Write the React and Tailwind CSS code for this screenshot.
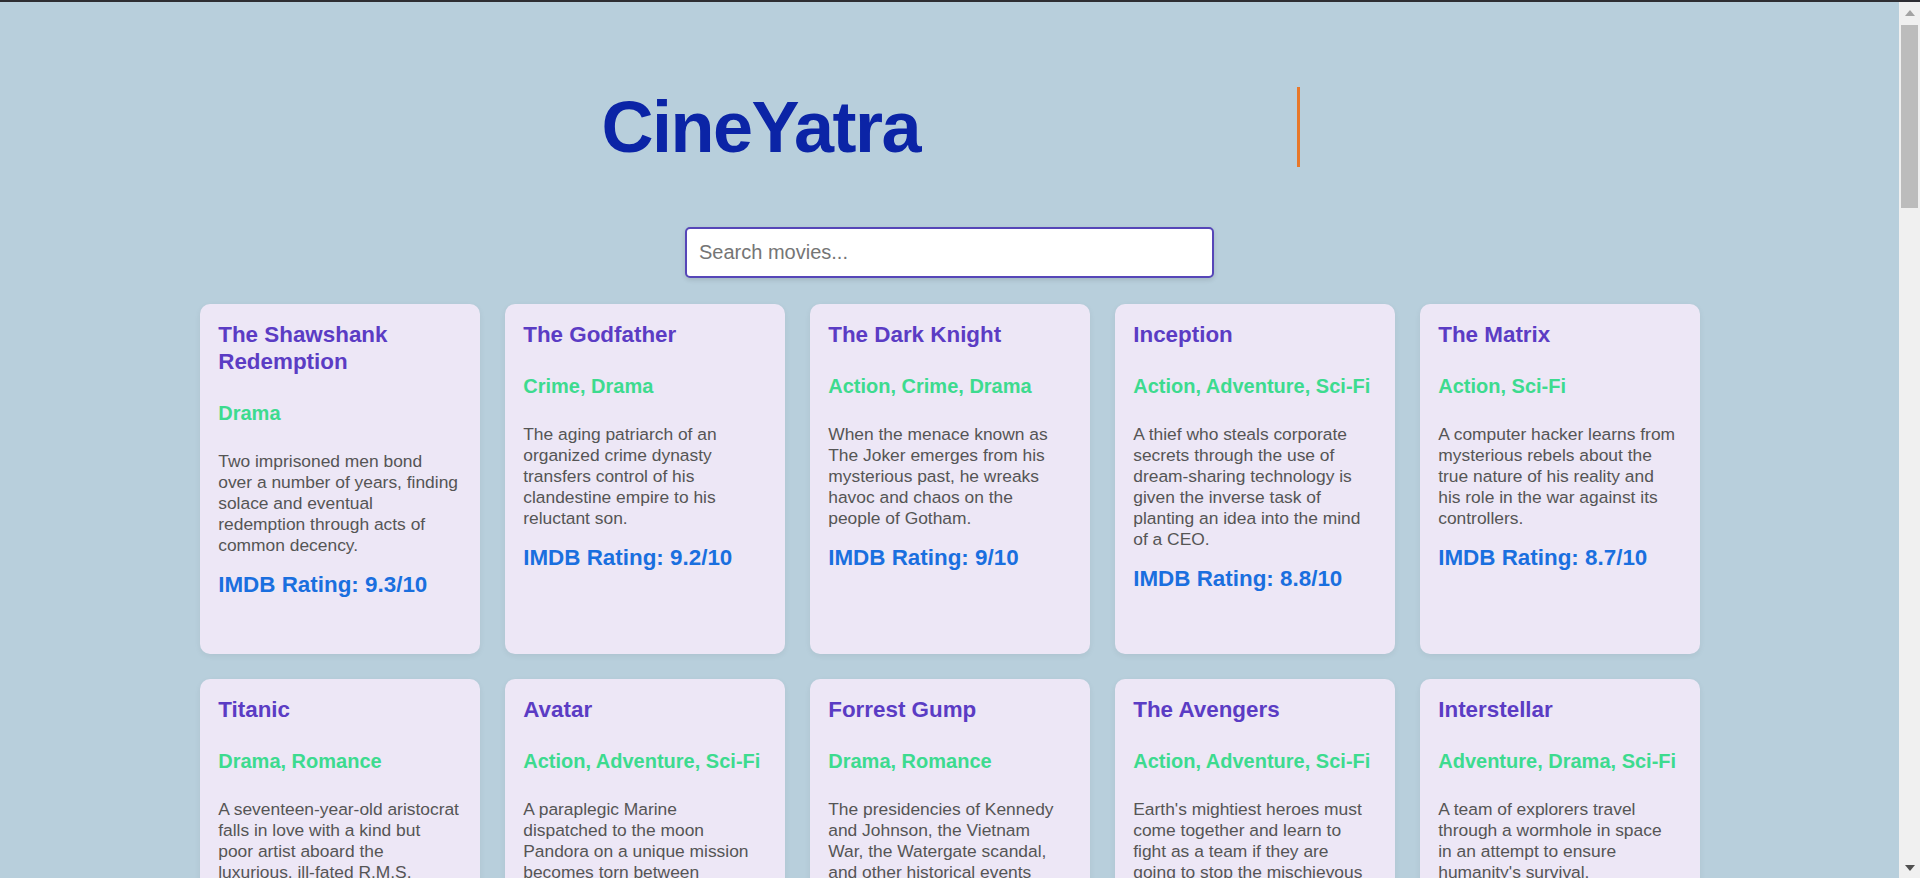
import React, { useState } from 'react';

// descriptions are kept as the lines the design wraps them into
const movies = [
  {
    title: 'The Shawshank Redemption',
    genre: 'Drama',
    lines: ['Two imprisoned men bond', 'over a number of years, finding', 'solace and eventual', 'redemption through acts of', 'common decency.'],
    rating: 9.3,
  },
  {
    title: 'The Godfather',
    genre: 'Crime, Drama',
    lines: ['The aging patriarch of an', 'organized crime dynasty', 'transfers control of his', 'clandestine empire to his', 'reluctant son.'],
    rating: 9.2,
  },
  {
    title: 'The Dark Knight',
    genre: 'Action, Crime, Drama',
    lines: ['When the menace known as', 'The Joker emerges from his', 'mysterious past, he wreaks', 'havoc and chaos on the', 'people of Gotham.'],
    rating: 9,
  },
  {
    title: 'Inception',
    genre: 'Action, Adventure, Sci-Fi',
    lines: ['A thief who steals corporate', 'secrets through the use of', 'dream-sharing technology is', 'given the inverse task of', 'planting an idea into the mind', 'of a CEO.'],
    rating: 8.8,
  },
  {
    title: 'The Matrix',
    genre: 'Action, Sci-Fi',
    lines: ['A computer hacker learns from', 'mysterious rebels about the', 'true nature of his reality and', 'his role in the war against its', 'controllers.'],
    rating: 8.7,
  },
  {
    title: 'Titanic',
    genre: 'Drama, Romance',
    lines: ['A seventeen-year-old aristocrat', 'falls in love with a kind but', 'poor artist aboard the', 'luxurious, ill-fated R.M.S.', 'Titanic.'],
    rating: 7.9,
  },
  {
    title: 'Avatar',
    genre: 'Action, Adventure, Sci-Fi',
    lines: ['A paraplegic Marine', 'dispatched to the moon', 'Pandora on a unique mission', 'becomes torn between', 'following his orders and', 'protecting the world he feels', 'is his home.'],
    rating: 7.9,
  },
  {
    title: 'Forrest Gump',
    genre: 'Drama, Romance',
    lines: ['The presidencies of Kennedy', 'and Johnson, the Vietnam', 'War, the Watergate scandal,', 'and other historical events', 'unfold from the perspective', 'of an Alabama man.'],
    rating: 8.8,
  },
  {
    title: 'The Avengers',
    genre: 'Action, Adventure, Sci-Fi',
    lines: ["Earth's mightiest heroes must", 'come together and learn to', 'fight as a team if they are', 'going to stop the mischievous', 'Loki and his alien army.'],
    rating: 8,
  },
  {
    title: 'Interstellar',
    genre: 'Adventure, Drama, Sci-Fi',
    lines: ['A team of explorers travel', 'through a wormhole in space', 'in an attempt to ensure', "humanity's survival."],
    rating: 8.6,
  },
];

const MovieCard = ({ movie }) => (
  <div className="h-[350px] rounded-[10px] bg-[#ede7f6] pt-[17px] px-[18.75px] shadow-[0_2px_6px_rgba(0,0,0,0.06)]">
    <h3 className="text-[22.4px] leading-[27px] font-bold text-[#5b3cc4]">{movie.title}</h3>
    <p className="mt-[26.5px] text-[20px] leading-[23px] font-bold text-[#3ddb8f]">{movie.genre}</p>
    <p className="mt-[26.5px] text-[17.4px] leading-[21px] text-[#555555]">
      {movie.lines.map((line, i) => (
        <span key={i} className="block whitespace-nowrap">{line}</span>
      ))}
    </p>
    <p className="mt-[16px] text-[22.4px] leading-[26px] font-bold text-[#1a6fdf]">
      IMDB Rating: {movie.rating}/10
    </p>
  </div>
);

// fake window scrollbar, the screenshot has one
const ScrollBar = () => (
  <div className="w-[21px] shrink-0 bg-[#f0f0f0] flex flex-col items-center">
    <div className="h-[21px] w-full flex items-center justify-center">
      <svg width="10" height="6" viewBox="0 0 10 6">
        <polygon points="5,0 10,6 0,6" fill="#a3a3a3" />
      </svg>
    </div>
    <div className="mt-[2px] h-[183px] w-[17px] bg-[#bcbcbc]" />
    <div className="flex-1" />
    <div className="h-[21px] w-full flex items-center justify-center">
      <svg width="10" height="6" viewBox="0 0 10 6">
        <polygon points="0,0 10,0 5,6" fill="#505050" />
      </svg>
    </div>
  </div>
);

export default function App() {
  const [query, setQuery] = useState('');

  const filtered = movies.filter((m) =>
    m.title.toLowerCase().includes(query.toLowerCase())
  );

  return (
    <div className="h-screen w-full flex flex-col overflow-hidden font-['Liberation_Sans',Arial,sans-serif]">
      <div className="h-[2px] shrink-0 bg-[#2e2e33]" />
      <div className="flex flex-1 min-h-0">
        <main className="flex-1 overflow-hidden bg-[#b8cfdc] pt-[85px]">
          <h1 className="mx-auto w-[700px] h-[80px] pl-[2px] leading-[80px] text-[72px] font-bold tracking-[-1.5px] text-[#0b24a6] border-r-[3px] border-[#e8782a] whitespace-nowrap overflow-hidden">
            CineYatra
          </h1>

          <input
            type="text"
            value={query}
            onChange={(e) => setQuery(e.target.value)}
            placeholder="Search movies..."
            className="block mx-auto mt-[60px] w-[529px] h-[51px] px-[12px] bg-white border-2 border-[#5646b8] rounded-[5px] text-[20px] text-[#333] placeholder:text-[#757575] outline-none shadow-[0_2px_5px_rgba(0,0,0,0.12)]"
          />

          {/* Movie grid */}
          <div className="mt-[26px] grid grid-cols-[repeat(5,280px)] justify-center gap-[25px]">
            {filtered.map((movie) => (
              <MovieCard key={movie.title} movie={movie} />
            ))}
          </div>
        </main>
        <ScrollBar />
      </div>
    </div>
  );
}
